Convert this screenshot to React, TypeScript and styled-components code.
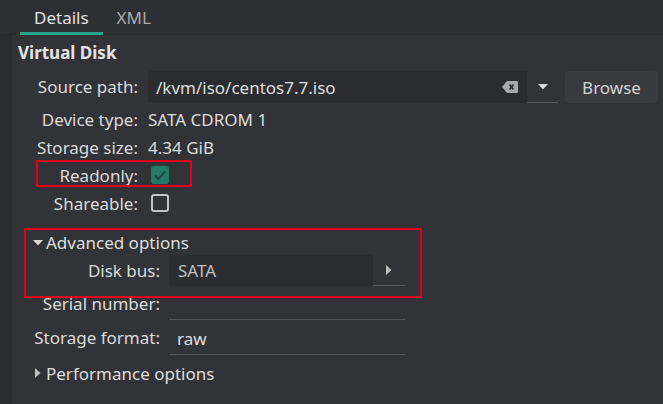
import React from "react";
import styled, { createGlobalStyle } from "styled-components";

const Global = createGlobalStyle`
  html, body { margin: 0; padding: 0; background: #323338; }
  body { font-family: "Noto Sans", "Open Sans", sans-serif; color: #dcdcdc; }
  * { box-sizing: border-box; }
`;

const Page = styled.div`
  width: 663px;
  height: 404px;
  display: flex;
  flex-direction: column;
  overflow: hidden;
  background: #323338;
`;

const TabBar = styled.div`
  height: 35px;
  display: flex;
  align-items: stretch;
  padding-left: 20px;
  background: #2e2f34;
  border-bottom: 1px solid #27282c;
`;

const Tab = styled.div<{ $active?: boolean }>`
  display: flex;
  align-items: center;
  padding: 0 14px;
  font-size: 17px;
  color: ${(p) => (p.$active ? "#e2e2e2" : "#a9aaad")};
  border-bottom: 3px solid ${(p) => (p.$active ? "#26a48a" : "transparent")};
  padding-top: 2px;
  margin-bottom: -1px;
`;

const Body = styled.div`
  flex: 1;
  display: flex;
`;

const Strip = styled.div`
  width: 12px;
  background: #2b2c30;
`;

const Content = styled.div`
  flex: 1;
  display: flex;
  flex-direction: column;
`;

const Heading = styled.div`
  font-weight: 700;
  font-size: 17px;
  line-height: 20px;
  padding: 8px 0 0 6px;
  margin-bottom: 8px;
  color: #e4e4e4;
`;

const Row = styled.div<{ $h: number }>`
  position: relative;
  display: flex;
  align-items: center;
  height: ${(p) => p.$h}px;
`;

const Label = styled.div<{ $w: number; $top?: boolean }>`
  width: ${(p) => p.$w}px;
  flex: none;
  text-align: right;
  font-size: 17px;
  color: #dadada;
  white-space: nowrap;
  align-self: ${(p) => (p.$top ? "flex-start" : "auto")};
  line-height: ${(p) => (p.$top ? "32px" : "normal")};
`;

const Value = styled.div<{ $gap: number }>`
  margin-left: ${(p) => p.$gap}px;
  font-size: 17px;
  color: #dcdcdc;
  display: flex;
  align-items: center;
`;

const EntryGroup = styled.div`
  margin-left: 10px;
  display: flex;
  align-items: stretch;
  height: 32px;
  align-self: flex-start;
`;

const Entry = styled.div`
  width: 379px;
  background: #2b2c30;
  border-radius: 3px 0 0 3px;
  display: flex;
  align-items: center;
  padding: 0 9px 0 8px;
  font-size: 17px;
  color: #dedede;
`;

const EntryText = styled.span`
  flex: 1;
`;

const DropButton = styled.div`
  width: 31px;
  display: flex;
  align-items: center;
  justify-content: center;
  border-bottom: 1px solid #595a5f;
`;

const BrowseButton = styled.div`
  margin-left: 7px;
  width: 93px;
  background: #3a3b40;
  border-radius: 4px;
  display: flex;
  align-items: center;
  justify-content: center;
  font-size: 17px;
  color: #d2d2d2;
`;

const Check = styled.div<{ $checked?: boolean }>`
  width: 18px;
  height: 18px;
  margin-left: 3px;
  border-radius: 3px;
  display: flex;
  align-items: center;
  justify-content: center;
  background: ${(p) => (p.$checked ? "#227a68" : "transparent")};
  border: ${(p) => (p.$checked ? "none" : "2px solid #c4c4c4")};
`;

const Annotation = styled.div<{ $l: number; $t: number; $w: number; $h: number }>`
  position: absolute;
  left: ${(p) => p.$l}px;
  top: ${(p) => p.$t}px;
  width: ${(p) => p.$w}px;
  height: ${(p) => p.$h}px;
  border: 2px solid #e4001a;
  pointer-events: none;
`;

const Section = styled.div<{ $mt: number }>`
  position: relative;
  margin-top: ${(p) => p.$mt}px;
  display: flex;
  flex-direction: column;
`;

const ExpanderHeader = styled.div<{ $h: number; $mt?: number }>`
  height: ${(p) => p.$h}px;
  margin-top: ${(p) => p.$mt ?? 0}px;
  display: flex;
  align-items: center;
  padding-left: 21px;
  font-size: 17px;
  color: #dedede;
`;

const Arrow = styled.span<{ $w: number }>`
  width: ${(p) => p.$w}px;
  display: flex;
  align-items: center;
  justify-content: center;
  margin-right: 3px;
`;

const Combo = styled.div`
  margin-left: 9px;
  display: flex;
  height: 31px;
`;

const ComboField = styled.div`
  width: 204px;
  background: #2c2d31;
  border-radius: 3px 0 0 3px;
  display: flex;
  align-items: center;
  padding-left: 9px;
  font-size: 17px;
  color: #bfc0c2;
`;

const ComboButton = styled.div`
  width: 32px;
  display: flex;
  align-items: center;
  justify-content: center;
  border-bottom: 1px solid #595a5f;
`;

const LineEntry = styled.div`
  margin-left: 9px;
  width: 236px;
  height: 32px;
  margin-top: 2px;
  border-bottom: 1px solid #55565b;
  display: flex;
  align-items: center;
  padding-left: 8px;
  font-size: 17px;
  color: #dedede;
`;

const ClearIcon = () => (
  <svg width="16" height="12" viewBox="0 0 16 12">
    <path d="M5 0 H15 a1 1 0 0 1 1 1 V11 a1 1 0 0 1 -1 1 H5 L0 6 Z" fill="#a8a9ac" />
    <path d="M7.5 3.5 L11.5 8.5 M11.5 3.5 L7.5 8.5" stroke="#2b2c30" strokeWidth="1.8" />
  </svg>
);

const DownTri = () => (
  <svg width="10" height="6" viewBox="0 0 10 6">
    <path d="M0 0 H10 L5 5.5 Z" fill="#d8d8d8" />
  </svg>
);

const RightTri = () => (
  <svg width="6" height="10" viewBox="0 0 6 10">
    <path d="M0 0 L5.5 5 L0 10 Z" fill="#bdbdbd" />
  </svg>
);

const CheckMark = () => (
  <svg width="14" height="12" viewBox="0 0 14 12">
    <path d="M2 6.5 L5.5 10 L12 2.5" stroke="#2a3633" strokeWidth="1.8" fill="none" />
  </svg>
);

export default function App() {
  return (
    <Page>
      <Global />
      <TabBar>
        <Tab $active>Details</Tab>
        <Tab>XML</Tab>
      </TabBar>
      <Body>
        <Strip />
        <Content>
          <Heading>Virtual Disk</Heading>
          <Row $h={34}>
            <Label $w={126} $top>Source path:</Label>
            <EntryGroup>
              <Entry>
                <EntryText>/kvm/iso/centos7.7.iso</EntryText>
                <ClearIcon />
              </Entry>
              <DropButton>
                <DownTri />
              </DropButton>
              <BrowseButton>Browse</BrowseButton>
            </EntryGroup>
          </Row>
          <Row $h={28}>
            <Label $w={126}>Device type:</Label>
            <Value $gap={10}>SATA CDROM 1</Value>
          </Row>
          <Row $h={28}>
            <Label $w={126}>Storage size:</Label>
            <Value $gap={10}>4.34 GiB</Value>
          </Row>
          <Row $h={28}>
            <Label $w={126}>Readonly:</Label>
            <Value $gap={10}>
              <Check $checked>
                <CheckMark />
              </Check>
            </Value>
            <Annotation $l={24} $t={-1} $w={156} $h={27} />
          </Row>
          <Row $h={28}>
            <Label $w={126}>Shareable:</Label>
            <Value $gap={10}>
              <Check />
            </Value>
          </Row>
          <Section $mt={13}>
            <ExpanderHeader $h={25}>
              <Arrow $w={10}>
                <DownTri />
              </Arrow>
              Advanced options
            </ExpanderHeader>
            <Row $h={31}>
              <Label $w={148}>Disk bus:</Label>
              <Combo>
                <ComboField>SATA</ComboField>
                <ComboButton>
                  <RightTri />
                </ComboButton>
              </Combo>
            </Row>
            <Row $h={34}>
              <Label $w={148}>Serial number:</Label>
              <LineEntry />
            </Row>
            <Row $h={35}>
              <Label $w={148}>Storage format:</Label>
              <LineEntry>raw</LineEntry>
            </Row>
            <Annotation $l={12} $t={-2} $w={398} $h={70} />
          </Section>
          <ExpanderHeader $h={26} $mt={5}>
            <Arrow $w={10}>
              <RightTri />
            </Arrow>
            Performance options
          </ExpanderHeader>
        </Content>
      </Body>
    </Page>
  );
}
